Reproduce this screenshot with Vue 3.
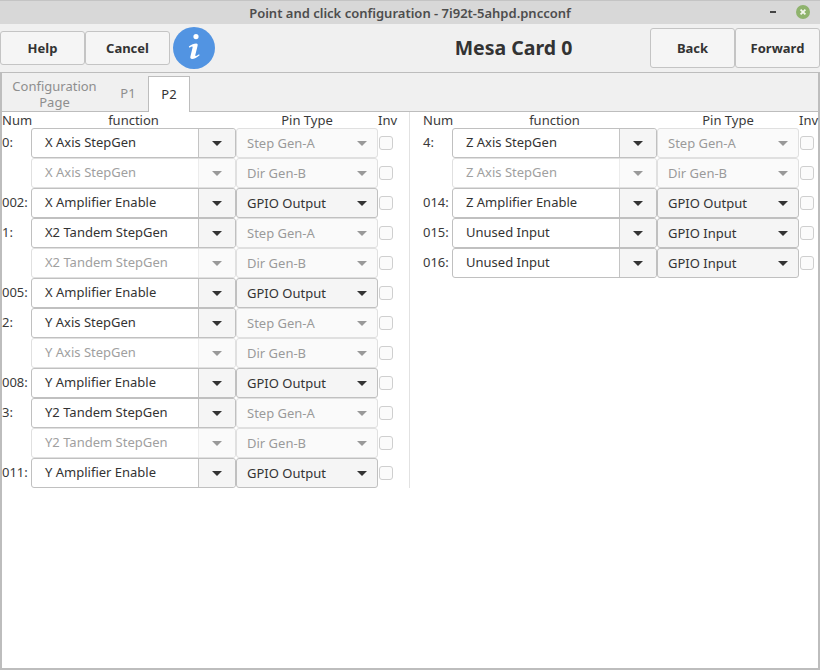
<script setup>
const left = [
  { n: '0:', f: 'X Axis StepGen', p: 'Step Gen-A', d: 0 },
  { n: '', f: 'X Axis StepGen', p: 'Dir Gen-B', d: 1 },
  { n: '002:', f: 'X Amplifier Enable', p: 'GPIO Output', d: 2 },
  { n: '1:', f: 'X2 Tandem StepGen', p: 'Step Gen-A', d: 0 },
  { n: '', f: 'X2 Tandem StepGen', p: 'Dir Gen-B', d: 1 },
  { n: '005:', f: 'X Amplifier Enable', p: 'GPIO Output', d: 2 },
  { n: '2:', f: 'Y Axis StepGen', p: 'Step Gen-A', d: 0 },
  { n: '', f: 'Y Axis StepGen', p: 'Dir Gen-B', d: 1 },
  { n: '008:', f: 'Y Amplifier Enable', p: 'GPIO Output', d: 2 },
  { n: '3:', f: 'Y2 Tandem StepGen', p: 'Step Gen-A', d: 0 },
  { n: '', f: 'Y2 Tandem StepGen', p: 'Dir Gen-B', d: 1 },
  { n: '011:', f: 'Y Amplifier Enable', p: 'GPIO Output', d: 2 },
]
const right = [
  { n: '4:', f: 'Z Axis StepGen', p: 'Step Gen-A', d: 0 },
  { n: '', f: 'Z Axis StepGen', p: 'Dir Gen-B', d: 1 },
  { n: '014:', f: 'Z Amplifier Enable', p: 'GPIO Output', d: 2 },
  { n: '015:', f: 'Unused Input', p: 'GPIO Input', d: 2 },
  { n: '016:', f: 'Unused Input', p: 'GPIO Input', d: 2 },
]
const panels = [
  { key: 'l', rows: left },
  { key: 'r', rows: right },
]
</script>

<template>
  <div class="window">
    <div class="titlebar">
      <span class="title">Point and click configuration - 7i92t-5ahpd.pncconf</span>
      <span class="minimize"></span>
      <span class="close">
        <svg width="14" height="14" viewBox="0 0 14 14"><circle cx="7" cy="7" r="7" fill="#8fb36d" /><path d="M4.6 4.6l4.800 4.800M9.400 4.600l-4.800 4.800" stroke="#f4f7ee" stroke-width="1.800" /></svg>
      </span>
    </div>
    <div class="toolbar">
      <button class="btn help">Help</button>
      <button class="btn cancel">Cancel</button>
      <svg class="info" width="42" height="42" viewBox="0 0 42 42">
        <circle cx="21" cy="21" r="21" fill="#5294e2" />
        <path d="M23 7a2.600 2.600 0 1 1 0 5.200a2.600 2.600 0 0 1 0-5.200zM15.800 19.400c2.600-1.900 5.200-2.900 7.400-2.900c1.300 0 1.700.9 1.400 2.200l-2.300 9.400c-.2.800.2 1.100.8.900c.9-.3 1.900-.9 3-1.800l.5 1c-2.600 2.400-5.300 3.800-7.500 3.800c-1.500 0-2.100-1-1.700-2.500l2.200-9c.2-.8-.2-1.100-.8-.9c-.7.200-1.500.6-2.300 1.200z" fill="#fff" />
      </svg>
      <div class="heading">Mesa Card 0</div>
      <button class="btn back">Back</button>
      <button class="btn forward">Forward</button>
    </div>
    <div class="body">
      <div class="tabs">
        <div class="tab two">Configuration<br />Page</div>
        <div class="tab p1">P1</div>
        <div class="tab active">P2</div>
      </div>
      <div class="page">
        <div class="panels">
          <div v-for="panel in panels" :key="panel.key" class="panel" :class="panel.key">
            <div class="head">
              <span class="h-num">Num</span>
              <span class="h-fn">function</span>
              <span class="h-pin">Pin Type</span>
              <span class="h-inv">Inv</span>
            </div>
            <div v-for="(r, i) in panel.rows" :key="i" class="row">
              <span class="num">{{ r.n }}</span>
              <div class="combo" :class="{ off: r.d === 1 }">
                <span class="entry">{{ r.f }}</span>
                <span class="drop"><i class="arrow"></i></span>
              </div>
              <div class="pin" :class="{ off: r.d !== 2 }">
                <span class="pin-text">{{ r.p }}</span>
                <i class="arrow"></i>
              </div>
              <span class="check"></span>
            </div>
          </div>
        </div>
      </div>
    </div>
  </div>
</template>

<style scoped>
.window {
  width: 820px;
  height: 670px;
  background: #f0f0f0;
  display: flex;
  flex-direction: column;
  font-family: "Noto Sans", "Open Sans", sans-serif;
  font-size: 13px;
  color: #3a3a3a;
  overflow: hidden;
}
.titlebar {
  height: 24px;
  box-sizing: border-box;
  background: #d8d8d8;
  border-top: 1px solid #c4c4c4;
  position: relative;
  display: flex;
  align-items: center;
  justify-content: center;
  flex: none;
}
.title { font-size: 13px; font-weight: 600; color: #4d4d4d; }
.minimize {
  position: absolute;
  left: 770px;
  top: 10px;
  width: 6px;
  height: 2px;
  background: #444;
}
.close { position: absolute; left: 796px; top: 4px; line-height: 0; }
.toolbar {
  height: 49px;
  flex: none;
  display: flex;
  align-items: flex-start;
  box-sizing: border-box;
  padding-top: 4px;
  border-bottom: 1px solid #bdbdbd;
  border-left: 0;
}
.btn {
  height: 34px;
  box-sizing: border-box;
  margin: 0;
  padding: 0;
  border: 1px solid #c4c4c4;
  border-radius: 3px;
  background: #f5f5f5;
  font: 700 13px "Noto Sans", sans-serif;
  color: #333;
  flex: none;
}
.help { width: 85px; margin-top: 3px; }
.cancel { width: 85px; margin-top: 3px; }
.info { margin-left: 3px; margin-top: -1px; flex: none; }
.heading {
  flex: 1;
  text-align: center;
  font-size: 19.5px;
  font-weight: 700;
  color: #333;
  line-height: 40px;
  padding-left: 162px;
}
.back, .forward { height: 40px; margin-top: 0; }
.back { width: 85px; }
.forward { width: 85px; }
.body {
  flex: 1;
  display: flex;
  flex-direction: column;
  border: 2px solid #bdbdbd;
  border-top: 0;
}
.tabs {
  height: 39px;
  flex: none;
  display: flex;
  align-items: flex-end;
  background: #f0f0f0;
  border-bottom: 1px solid #bdbdbd;
  box-sizing: border-box;
}
.tab { color: #8e8e8e; text-align: center; font-size: 13px; line-height: 16px; box-sizing: border-box; }
.two { width: 105px; padding: 6px 0 1px 0; }
.p1 { width: 40px; height: 36px; line-height: 34px; margin-left: 1px; margin-bottom: -1px; }
.active {
  width: 42px;
  height: 36px;
  line-height: 34px;
  background: #fff;
  border: 1px solid #bdbdbd;
  border-bottom: none;
  color: #333;
  margin-bottom: -1px;
  position: relative;
}
.page { flex: 1; background: #fff; }
.panels { display: flex; }
.panel { flex: none; box-sizing: border-box; }
.panel.l { width: 408px; border-right: 1px solid #e2e2e2; margin-right: 13px; }
.panel.r { width: 396px; }
.head { height: 16px; display: flex; line-height: 16px; font-size: 13px; color: #3a3a3a; }
.h-num { width: 29px; flex: none; text-align: left; }
.h-fn { width: 205px; flex: none; text-align: center; }
.h-pin { width: 142px; flex: none; text-align: center; }
.h-inv { width: 20px; flex: none; }
.row { display: flex; height: 30px; align-items: stretch; }
.num { width: 29px; flex: none; line-height: 28px; }
.combo {
  width: 205px;
  flex: none;
  display: flex;
  box-sizing: border-box;
  border: 1px solid #c0c0c0;
  border-radius: 3px;
  background: #fff;
  color: #333;
}
.entry { flex: 1; padding-left: 13px; line-height: 27px; }
.drop {
  width: 36px;
  flex: none;
  background: #f5f5f5;
  border-left: 1px solid #c4c4c4;
  display: flex;
  align-items: center;
  justify-content: center;
  border-radius: 0 3px 3px 0;
}
.arrow {
  display: block;
  width: 0;
  height: 0;
  border-left: 5px solid transparent;
  border-right: 5px solid transparent;
  border-top: 5px solid #333;
}
.combo.off { border-color: #e0e0e0; color: #a0a0a0; }
.combo.off .drop { background: #fafafa; border-left-color: #ececec; }
.combo.off .arrow { border-top-color: #999; }
.pin {
  width: 142px;
  flex: none;
  box-sizing: border-box;
  display: flex;
  align-items: center;
  justify-content: space-between;
  padding: 0 10px;
  border: 1px solid #c0c0c0;
  border-radius: 3px;
  background: #f5f5f5;
  color: #333;
}
.pin.off { border-color: #e0e0e0; background: #fafafa; color: #9a9a9a; }
.pin.off .arrow { border-top-color: #999; }
.check {
  width: 14px;
  height: 14px;
  flex: none;
  box-sizing: border-box;
  margin: 8px 0 0 1px;
  border: 1px solid #cfcfcf;
  border-radius: 3px;
  background: #fbfbfb;
}
</style>

<style>
html, body { margin: 0; padding: 0; }
</style>
